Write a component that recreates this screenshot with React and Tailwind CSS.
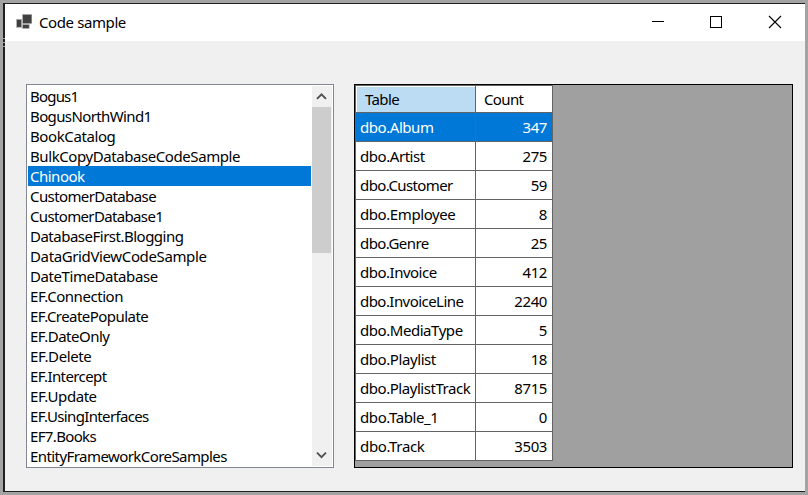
import React from "react";

const databases = [
  ["Bogus1", "tracking-[-0.8px]"],
  ["BogusNorthWind1", "tracking-[-0.62px]"],
  ["BookCatalog", "tracking-[-0.4px]"],
  ["BulkCopyDatabaseCodeSample", "tracking-[-0.42px]"],
  ["Chinook", "tracking-[-0.5px]"],
  ["CustomerDatabase", "tracking-[-0.6px]"],
  ["CustomerDatabase1", "tracking-[-0.65px]"],
  ["DatabaseFirst.Blogging", "tracking-[-0.5px]"],
  ["DataGridViewCodeSample", "tracking-[-0.37px]"],
  ["DateTimeDatabase", "tracking-[-0.42px]"],
  ["EF.Connection", "tracking-[-0.45px]"],
  ["EF.CreatePopulate", "tracking-[-0.54px]"],
  ["EF.DateOnly", "tracking-[-0.5px]"],
  ["EF.Delete", "tracking-[-0.38px]"],
  ["EF.Intercept", "tracking-[-0.6px]"],
  ["EF.Update", "tracking-[-0.45px]"],
  ["EF.UsingInterfaces", "tracking-[-0.65px]"],
  ["EF7.Books", "tracking-[-0.65px]"],
  ["EntityFrameworkCoreSamples", "tracking-[-0.57px]"],
];

const tables = [
  ["dbo.Album", 347, "tracking-[-0.45px]"],
  ["dbo.Artist", 275, "tracking-[-0.45px]"],
  ["dbo.Customer", 59, "tracking-[-0.6px]"],
  ["dbo.Employee", 8, "tracking-[-0.42px]"],
  ["dbo.Genre", 25, "tracking-[-0.57px]"],
  ["dbo.Invoice", 412, "tracking-[-0.5px]"],
  ["dbo.InvoiceLine", 2240, "tracking-[-0.55px]"],
  ["dbo.MediaType", 5, "tracking-[-0.45px]"],
  ["dbo.Playlist", 18, "tracking-[-0.42px]"],
  ["dbo.PlaylistTrack", 8715, "tracking-[-0.46px]"],
  ["dbo.Table_1", 0, "tracking-[-0.4px]"],
  ["dbo.Track", 3503, "tracking-[-0.35px]"],
];

function TitleBar() {
  return (
    <header className="relative flex h-[37px] shrink-0 items-center bg-white pb-px pl-[11px]">
      <span className="absolute top-[34px] -left-[2px] h-px w-[2px] bg-[#a0a0a0]" />
      <span className="absolute top-[38px] -left-[2px] h-px w-[2px] bg-[#a0a0a0]" />
      <span className="absolute top-[42px] -left-[2px] h-px w-[2px] bg-[#a0a0a0]" />
      <svg width="16" height="16" viewBox="0 0 16 16" className="shrink-0">
        <rect x="6.5" y="0.3" width="9.4" height="9.4" fill="#404040" stroke="#b8b8b8" strokeWidth="0.7" />
        <rect x="0.5" y="5.3" width="5.2" height="8" fill="#404040" stroke="#b8b8b8" strokeWidth="0.7" />
        <rect x="6.5" y="10.4" width="6.7" height="4.2" fill="#404040" stroke="#b8b8b8" strokeWidth="0.7" />
      </svg>
      <h1 className="ml-[7px] text-[15px] leading-5 tracking-[-0.4px]">Code sample</h1>
      <div className="mr-[24px] ml-auto flex items-center gap-[46px]">
        <svg width="12" height="12" shapeRendering="crispEdges"><rect y="5" width="12" height="1" /></svg>
        <svg width="12" height="12" shapeRendering="crispEdges"><rect x="0.5" y="0.5" width="11" height="11" fill="none" stroke="#000" /></svg>
        <svg width="13" height="12" className="overflow-visible"><path d="M1 0 L13 12 M13 0 L1 12" stroke="#000" strokeWidth="1.1" /></svg>
      </div>
    </header>
  );
}

function DatabaseList() {
  return (
    <div className="flex h-[384px] w-[308px] border border-[#828790] bg-white p-px">
      <ul className="mr-px w-[283px]">
        {databases.map(([name, tracking]) => (
          <li
            key={name}
            className={`h-5 pl-[2px] text-[15px] leading-[20px] whitespace-nowrap ${tracking} ${
              name === "Chinook" ? "bg-[#0078d7] text-white" : ""
            }`}
          >
            {name}
          </li>
        ))}
      </ul>
      <div className="flex w-5 flex-col bg-[#f0f0f0]">
        <div className="flex h-[21px] pt-[6px] pl-1">
          <svg width="11" height="8"><path d="M1 6.9 L5.5 2.4 L10 6.9" fill="none" stroke="#505050" strokeWidth="1.9" /></svg>
        </div>
        <div className="h-[146px] w-[19px] bg-[#cdcdcd]" />
        <div className="mt-auto flex h-[15px] pl-1">
          <svg width="11" height="8"><path d="M1 1.7 L5.5 6.2 L10 1.7" fill="none" stroke="#505050" strokeWidth="1.9" /></svg>
        </div>
      </div>
    </div>
  );
}

function TableGrid() {
  return (
    <div className="h-[384px] w-[439px] border border-black bg-[#a0a0a0]">
      <div className="w-[198px] border-t border-l border-[#646464] bg-white">
        <div className="flex h-[27px] border-b border-[#646464] text-[15px] leading-[24px]">
          <div className="w-[120px] border-r border-[#646464] pt-px pl-px">
            <div className="h-[25px] bg-[#bcdcf4] pl-[8px] tracking-[-0.6px]">Table</div>
          </div>
          <div className="w-[77px] border-r border-[#646464] pt-px pl-[8px] tracking-[-0.65px]">Count</div>
        </div>
        {tables.map(([name, count, tracking], i) => (
          <div
            key={name}
            className={`flex h-[29px] border-b border-[#646464] text-[15px] leading-[28px] whitespace-nowrap ${
              i === 0 ? "bg-[#0078d7] text-white" : ""
            }`}
          >
            <div className={`w-[120px] border-r border-[#646464] pl-[4px] ${tracking}`}>{name}</div>
            <div className="w-[77px] border-r border-[#646464] pr-[5px] text-right tracking-[-0.4px]">{count}</div>
          </div>
        ))}
      </div>
    </div>
  );
}

export default function App() {
  return (
    <div className="h-[495px] w-[808px] overflow-hidden bg-[#a3a3a3] p-[3px] font-['Noto_Sans','Open_Sans',sans-serif] text-black">
      <div className="flex h-[489px] w-[802px] flex-col border-t border-b border-l-2 border-[#202020] bg-[#f0f0f0]">
        <TitleBar />
        <main className="flex gap-5 pt-[43px] pl-[21px]">
          <DatabaseList />
          <TableGrid />
        </main>
      </div>
    </div>
  );
}
